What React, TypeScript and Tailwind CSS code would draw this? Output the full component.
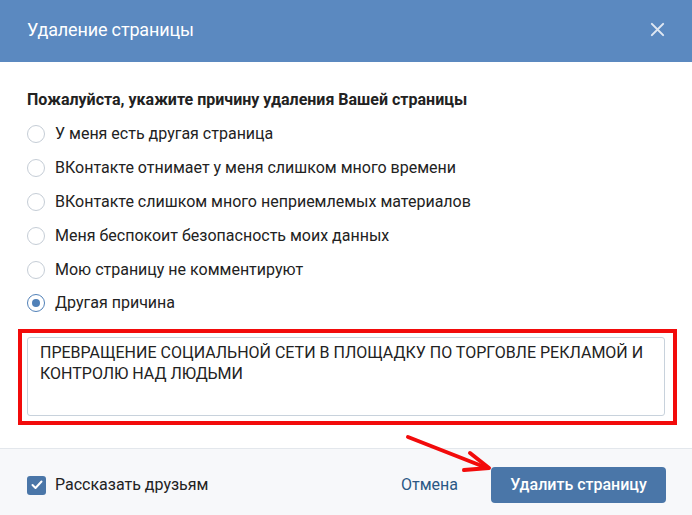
import React from "react";

const options = [
  "У меня есть другая страница",
  "ВКонтакте отнимает у меня слишком много времени",
  "ВКонтакте слишком много неприемлемых материалов",
  "Меня беспокоит безопасность моих данных",
  "Мою страницу не комментируют",
  "Другая причина",
];

export default function App() {
  return (
    <div
      className="relative w-[692px] h-[515px] bg-white flex flex-col overflow-hidden"
      style={{ fontFamily: "Roboto, 'Liberation Sans', sans-serif" }}
    >
      <div className="h-[62px] bg-[#5b89c0] flex items-center justify-between pl-[27px] pr-[27px] shrink-0">
        <div className="text-white text-[18px] tracking-[-0.15px] pb-[3px]">Удаление страницы</div>
        <svg width="15" height="15" viewBox="0 0 16 16" className="mb-[3px]">
          <path d="M2 2L14 14M14 2L2 14" stroke="#dfe7f2" strokeWidth="2.2" strokeLinecap="round" />
        </svg>
      </div>
      <div className="flex-1 flex flex-col px-[27px] pt-[28px]">
        <div className="text-[16px] font-bold text-[#222] leading-[19px]">
          Пожалуйста, укажите причину удаления Вашей страницы
        </div>
        <div className="flex flex-col mt-[15px] gap-[14px]">
          {options.map((o, i) => {
            const checked = i === options.length - 1;
            return (
              <div key={i} className={`flex items-center h-[20px] gap-[10px] ${checked ? "-mt-[1px]" : ""}`}>
                <div
                  className={`w-[18px] h-[18px] rounded-full border flex items-center justify-center ${
                    checked ? "border-[#5181b8]" : "border-[#c5cdd6]"
                  }`}
                >
                  {checked && <div className="w-[8px] h-[8px] rounded-full bg-[#5181b8]" />}
                </div>
                <div className="text-[16px] text-[#222]">{o}</div>
              </div>
            );
          })}
        </div>
        <div className="mt-[16px] -ml-[9px] -mr-[12px] border-[4px] border-[#f20b0b] pt-[4px] pb-[5px] pl-[5px] pr-[8px]">
          <div className="h-[79px] border border-[#c8d2dc] rounded-[3px] px-[12px] pt-[4px] text-[16px] leading-[21px] text-[#222]">
            ПРЕВРАЩЕНИЕ СОЦИАЛЬНОЙ СЕТИ В ПЛОЩАДКУ ПО ТОРГОВЛЕ РЕКЛАМОЙ И КОНТРОЛЮ НАД ЛЮДЬМИ
          </div>
        </div>
      </div>
      <div className="h-[67px] shrink-0 bg-[#f7f8fa] border-t border-[#e3e7ec] flex items-center pt-[6px] pl-[27px] pr-[26px]">
        <div className="w-[19px] h-[19px] rounded-[3px] bg-[#4a76a8] flex items-center justify-center">
          <svg width="12" height="10" viewBox="0 0 12 10">
            <path d="M1.5 5L4.5 8L10.5 1.5" stroke="white" strokeWidth="2" fill="none" strokeLinecap="round" strokeLinejoin="round" />
          </svg>
        </div>
        <div className="ml-[9px] text-[16px] text-[#222]">Рассказать друзьям</div>
        <div className="flex-1" />
        <div className="text-[16px] text-[#2a5885] mr-[33px]">Отмена</div>
        <div className="w-[175px] h-[36px] rounded-[4px] bg-[#4a76a8] text-white text-[16px] font-medium flex items-center justify-center">
          Удалить страницу
        </div>
      </div>
      <svg className="absolute left-0 top-0 pointer-events-none" width="692" height="515">
        <path d="M408 437L487 468" stroke="#f20b0b" strokeWidth="4" strokeLinecap="round" />
        <path d="M470 453L489 468L464 470" stroke="#f20b0b" strokeWidth="4" fill="none" strokeLinecap="round" strokeLinejoin="round" />
      </svg>
    </div>
  );
}
